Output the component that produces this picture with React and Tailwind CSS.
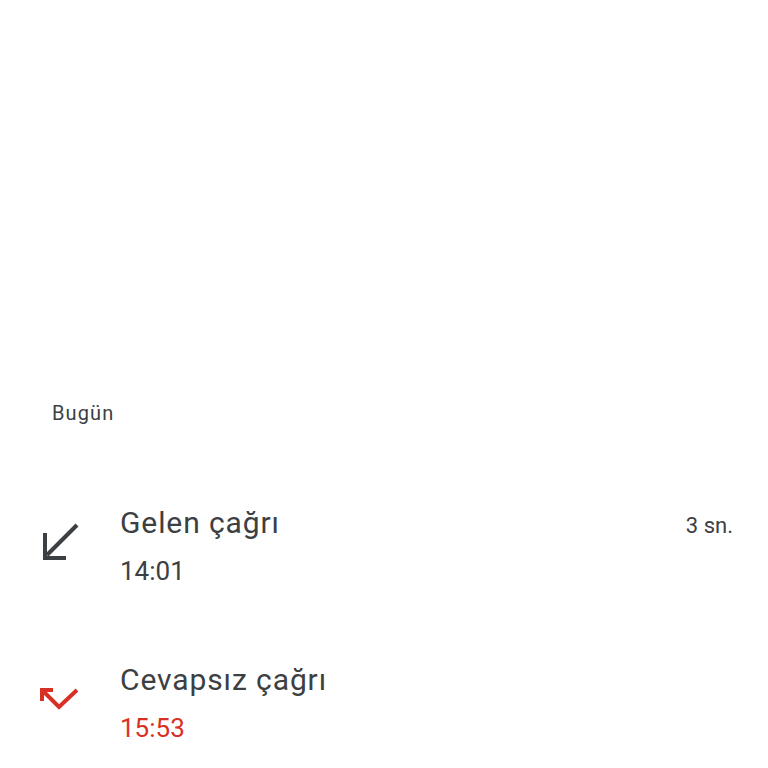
import { useState } from "react"

// call log entries for today
const calls = [
  { id: 1, title: "Gelen çağrı", time: "14:01", duration: "3 sn.", missed: false },
  { id: 2, title: "Cevapsız çağrı", time: "15:53", duration: null, missed: true },
]

function IncomingIcon() {
  return (
    <svg className="ml-[40px] mt-[17px] block" width="40" height="40" viewBox="0 0 40 40" fill="none">
      <path d="M37 3 L7 33" stroke="#3c4043" strokeWidth="4" />
      <path d="M5 11 V36 H26" stroke="#3c4043" strokeWidth="4" />
    </svg>
  )
}

function MissedIcon() {
  return (
    <svg className="ml-[36px] mt-[20px] block" width="44" height="32" viewBox="0 0 44 32" fill="none">
      <path d="M7 9 L23 25 L41 8" stroke="#d93025" strokeWidth="4" />
      <path d="M6 19 V8 H17" stroke="#d93025" strokeWidth="4" />
    </svg>
  )
}

export default function App() {
  const [selected, setSelected] = useState(null)

  return (
    <div
      className="min-h-[768px] w-[768px] bg-white text-[#3c4043]"
      style={{ fontFamily: "Roboto, 'Noto Sans', sans-serif" }}
    >
      <div className="pt-[400px]">
        <p className="pl-[52px] text-[20px] leading-[26px] tracking-[1.1px]">Bugün</p>
        <div className="mt-[79px] flex flex-col gap-[75px]">
          {calls.map((call) => (
            <div
              key={call.id}
              onClick={() => setSelected(call.id)}
              className="flex items-start"
            >
              <div className="w-[120px] shrink-0">
                {call.missed ? <MissedIcon /> : <IncomingIcon />}
              </div>
              <div className="flex-1">
                <div className="flex items-baseline justify-between pr-[35px]">
                  <span className="text-[30px] leading-[36px] tracking-[0.9px]">{call.title}</span>
                  {call.duration && (
                    <span className="text-[22px] leading-[28px]">{call.duration}</span>
                  )}
                </div>
                <p
                  className={
                    call.missed
                      ? "mt-[14px] text-[26px] leading-[32px] text-[#d93025]"
                      : "mt-[14px] text-[26px] leading-[32px]"
                  }
                >
                  {call.time}
                </p>
              </div>
            </div>
          ))}
        </div>
      </div>
    </div>
  )
}
